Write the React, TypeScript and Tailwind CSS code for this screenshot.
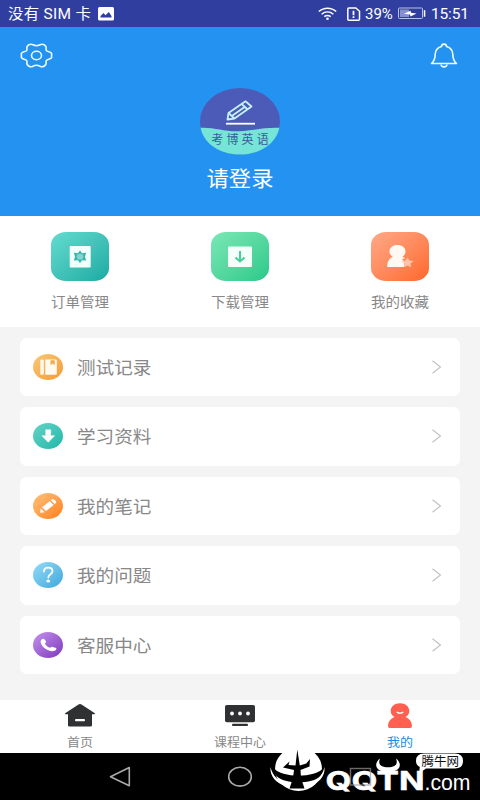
import type { ReactNode } from "react";

const shortcuts = [
  { t: "订单管理", bg: "from-[#63dccf] to-[#14aba3]", icon: <OrderIcon /> },
  { t: "下载管理", bg: "from-[#79e8b6] to-[#26c98a]", icon: <DownloadIcon /> },
  { t: "我的收藏", bg: "from-[#ffa987] to-[#ff6726]", icon: <FavoriteIcon /> },
];

const rows = [
  { t: "测试记录", bg: "from-[#f9c877] to-[#f59a2c]", icon: <BookIcon /> },
  { t: "学习资料", bg: "from-[#63d3c6] to-[#14b8a9]", icon: <ArrowIcon /> },
  { t: "我的笔记", bg: "from-[#ffc277] to-[#ff7e0c]", icon: <PencilIcon /> },
  { t: "我的问题", bg: "from-[#92dcf7] to-[#3ba7dc]", icon: <QuestionIcon /> },
  { t: "客服中心", bg: "from-[#c592ee] to-[#7e35bb]", icon: <PhoneIcon /> },
];

function OrderIcon() {
  return (
    <svg width="58" height="49" viewBox="0 0 58 49">
      <rect x="18.7" y="14" width="21" height="21.5" rx="1" fill="#f2fffd" />
      <path d="M29 18.6l2.1 2.7 4.1-.5-1.3 3.9 1.3 3.9-4.1-.4-2.1 2.8-2.1-2.8-4.1.4 1.3-3.9-1.3-3.9 4.1.5z" fill="#35b7ad" />
      <ellipse cx="29" cy="24.7" rx="3.4" ry="3" fill="#83d6cf" />
    </svg>
  );
}

function DownloadIcon() {
  return (
    <svg width="58" height="49" viewBox="0 0 58 49">
      <rect x="17" y="14.5" width="24" height="20.5" rx="1" fill="#f5fffa" />
      <path d="M29 19v10.5M24.5 25.5l4.5 4 4.5-4" fill="none" stroke="#45cf99" strokeWidth="2" />
    </svg>
  );
}

function FavoriteIcon() {
  return (
    <svg width="58" height="49" viewBox="0 0 58 49">
      <path d="M26.5 13c4.5 0 8 2.6 8 6.2 0 2.3-1.2 4.2-3 5.500 1 .4 2 1 2.700 1.600l-3.200.8 2.500 2.800-.6 5.100H16.200c0-5.500 2-8.700 5.500-10.300-1.900-1.300-3.200-3.200-3.200-5.500 0-3.600 3.500-6.200 8-6.200z" fill="#fff8f3" />
      <path d="M36.500 25.500l1.800 3 4.200.6-3 2.500.6 3.700-3.600-1.700-3.600 1.700.6-3.700-3-2.500 4.200-.6z" fill="#ffc4a9" />
    </svg>
  );
}

function BookIcon() {
  return (
    <svg width="30" height="26" viewBox="0 0 30 26">
      <rect x="7.3" y="5.5" width="3.5" height="15.3" rx="1" fill="#fffaf0" />
      <path d="M12.3 5.500h10.200a1.300 1.300 0 011.300 1.300v12.700a1.300 1.300 0 01-1.300 1.300H12.300z" fill="#fffaf0" />
      <path d="M17.500 6.300h4.200v5l-2.100-1.700-2.100 1.700z" fill="#f4a949" />
    </svg>
  );
}

function ArrowIcon() {
  return (
    <svg width="30" height="26" viewBox="0 0 30 26">
      <path d="M12.700 6.700h5v6h3.900l-6.400 6.600-6.400-6.600h3.900z" fill="#fff" stroke="#fff" strokeWidth=".5" strokeLinejoin="round" />
    </svg>
  );
}

function PencilIcon() {
  return (
    <svg width="30" height="26" viewBox="0 0 30 26">
      <path d="M7 19.800l.7-4.300 4 3.700z" fill="#fff" />
      <path d="M9 14.300l7.700-6 4 3.700-7.700 6z" fill="#fff" />
      <path d="M17.800 7.300l1.400-1c1.500-.7 4.800 2 3.800 3.800l-1.300 1z" fill="#fff" />
    </svg>
  );
}

function QuestionIcon() {
  return (
    <svg width="30" height="26" viewBox="0 0 30 26">
      <path d="M10.900 9.500c0-2.300 1.700-3.800 4.300-3.800 2.500 0 4.300 1.300 4.300 3.500 0 3-4.200 3-4.200 6.300" fill="none" stroke="#fff" strokeWidth="1.8" strokeLinecap="round" />
      <ellipse cx="15.2" cy="19" rx="1.9" ry="1.6" fill="#fff" />
    </svg>
  );
}

function PhoneIcon() {
  return (
    <svg width="30" height="26" viewBox="0 0 30 26">
      <path d="M8.300 7.800c1-1 2.500-1.400 3.300-.4l1.200 1.700c.5.800.1 1.500-.8 2.300.8 2.200 2.700 3.700 5.300 4.300.9-.8 1.700-1.100 2.500-.8l2.700.8c1.500.6 1 2-.2 2.700-2.600 1.500-7.200.7-10.600-2.100C8.400 13.600 6.600 9.900 8.300 7.800z" fill="#fff" />
    </svg>
  );
}

function StatusBar() {
  return (
    <div className="flex h-[27px] items-center bg-[#303f9f] px-2 font-['Roboto','Noto_Sans_CJK_SC',sans-serif] text-white">
      <span className="w-[84px] scale-y-[.94] text-[15.5px] leading-6 tracking-[.25px] whitespace-nowrap">没有 SIM 卡</span>
      <svg className="ml-[6px]" width="16" height="14" viewBox="0 0 16 14">
        <rect width="16" height="13.5" rx="1.5" fill="#fff" />
        <path d="M2.500 10.500V9l3-3 2 2.200L10.800 5l2.700 4v1.500z" fill="#303f9f" />
      </svg>
      <svg className="ml-auto" width="19" height="14" viewBox="0 0 19 14" fill="none" stroke="#fff" strokeWidth="1.5">
        <path d="M.8 4.500c5-4.500 12.400-4.500 17.400 0M3.600 7.200c3.500-3 8.300-3 11.800 0M6.300 9.700c2-1.600 4.400-1.600 6.400 0" />
        <circle cx="9.500" cy="11.700" r="1.300" fill="#fff" stroke="none" />
      </svg>
      <svg className="ml-[9px]" width="15" height="14" viewBox="0 0 15 14" fill="none" stroke="#fff" strokeWidth="1.500">
        <path d="M2.800 1h7l3.700 3.300v7.900q0 1-1 1H2.800q-1 0-1-1V6.200L1.800 2q0-1 1-1z" />
        <path d="M7.500 3.800v4.400M7.500 9.300v1.700" strokeWidth="1.800" />
      </svg>
      <span className="ml-[4px] w-[29px] scale-y-[.94] text-[15px] leading-6">39%</span>
      <svg className="ml-[4px]" width="28" height="13" viewBox="0 0 28 13">
        <rect x=".5" y="1" width="24" height="10.5" rx="1" fill="none" stroke="#b9c0ea" />
        <rect x="2" y="2.5" width="9" height="7.5" fill="#8791cd" />
        <path d="M6 6.700l6.500-3 .5 2 5.500.8-6 3-.5-2z" fill="#fff" />
        <rect x="25.8" y="3.2" width="1.5" height="6.5" fill="#fff" />
      </svg>
      <span className="mr-[4px] ml-[5px] w-[37px] scale-y-[.94] text-[15.5px] leading-6 tracking-[-.15px]">15:51</span>
    </div>
  );
}

function Avatar() {
  return (
    <svg width="80" height="67" viewBox="0 0 80 67">
      <ellipse cx="40" cy="33.3" rx="40" ry="33.3" fill="#4c5bb8" />
      <path d="M.6 39.800C14 39 25 44 39 43.300c14-.7 24-4 40.400-3.500C76.500 55.500 60 66.600 40 66.600S3.500 55.500.6 39.800z" fill="#76e5d7" />
      <g fill="none" stroke="#c5f1f5" strokeWidth="1.800" strokeLinejoin="round">
        <path d="M27.500 31.500l1-6.500L45.500 13.300l6 5.200-17 12z" />
        <path d="M28.500 25l6 5.500M41.500 16l6 5.200M32.500 27.500l12.500-8.700" />
        <path d="M26 35.700h29" stroke="#fff" />
      </g>
      <text x="11.300" y="56" fontSize="12" textLength="57.500" fill="#3e57a5">考博英语</text>
    </svg>
  );
}

function Header() {
  return (
    <header className="flex h-[188.500px] flex-col bg-[#2492f1]">
      <div className="flex h-[61px] items-start justify-between pt-4 pr-[22px] pl-5">
        <svg width="33" height="26" viewBox="0 0 33 26" fill="none" stroke="#edfbff" strokeWidth="1.6">
          <path d="M11 1.200c1.800 0 2.400 1.500 5.500 1.500s3.700-1.500 5.500-1.500c1.600 0 3.500 1.500 4 2.600.6 1.600-.6 2.300.4 3.800s4.800 1 5.200 2.900v4c-.4 1.900-4.200 1.400-5.200 2.900s.2 2.200-.4 3.800c-.5 1.100-2.400 2.600-4 2.600-1.800 0-2.400-1.500-5.500-1.500s-3.700 1.500-5.500 1.500c-1.600 0-3.500-1.500-4-2.600-.6-1.600.6-2.300-.4-3.800s-4.800-1-5.200-2.900v-4c.4-1.900 4.200-1.400 5.200-2.900s-.2-2.200.4-3.800c.5-1.100 2.400-2.600 4-2.600z" />
          <ellipse cx="16.500" cy="12.500" rx="5" ry="4.200" />
        </svg>
        <svg width="28" height="27" viewBox="0 0 28 27" fill="none" stroke="#edfbff" strokeWidth="1.600" strokeLinejoin="round">
          <path d="M11.500 3.500c0-3.200 5-3.200 5 0 4.500 1.300 6.300 4 6.300 8 0 4.500 1 6.500 3.700 9H1.500c2.700-2.500 3.700-4.500 3.700-9 0-4 1.800-6.700 6.300-8z" />
          <path d="M11 21.500c.3 3.200 5.700 3.200 6 0" />
        </svg>
      </div>
      <div className="flex flex-col items-center">
        <Avatar />
        <span className="mt-[6px] scale-y-[.94] text-[22.300px] leading-8 text-white">请登录</span>
      </div>
    </header>
  );
}

function Shortcuts() {
  return (
    <section className="grid h-[111px] grid-cols-3 bg-white pt-4">
      {shortcuts.map((s) => (
        <div key={s.t} className="flex flex-col items-center">
          <div className={`h-[49px] w-[58px] rounded-[15px/13px] bg-gradient-to-br ${s.bg}`}>{s.icon}</div>
          <span className="mt-[10px] scale-y-[.94] text-[14.500px] leading-5 text-[#888]">{s.t}</span>
        </div>
      ))}
    </section>
  );
}

function Row({ t, bg, icon }: { t: string; bg: string; icon: ReactNode }) {
  return (
    <div className="flex h-[58.300px] items-center rounded-[7px] bg-white pr-[18px] pl-[13px]">
      <div className={`h-[26px] w-[30px] rounded-[50%] bg-gradient-to-br ${bg}`}>{icon}</div>
      <span className="mb-[2px] ml-[14px] scale-y-[.94] text-[18.600px] leading-7 text-[#888]">{t}</span>
      <svg className="ml-auto" width="11" height="14" viewBox="0 0 11 14" fill="none" stroke="#c0c0c0" strokeWidth="1.100">
        <path d="M1.500.8L9.500 7l-8 6.200" />
      </svg>
    </div>
  );
}

function TabBar() {
  return (
    <nav className="grid h-[53px] grid-cols-3 bg-white pt-[3px] text-[13px] leading-4 text-[#888]">
      <div className="flex flex-col items-center">
        <svg width="30" height="26" viewBox="0 -1 30 26">
          <path d="M15 0c.6 0 1 .2 1.500.5l13 8.500c.8.600.4 1.300-.5 1.300h-2v11q0 1.200-1.400 1.200H4.400Q3 22.500 3 21.300v-11H1c-.9 0-1.300-.7-.5-1.300l13-8.500c.5-.3.9-.5 1.500-.5z" fill="#303133" />
          <rect x="10" y="15" width="10" height="2.300" rx="1" fill="#fff" />
        </svg>
        <span className="mt-[5px] scale-y-[.94]">首页</span>
      </div>
      <div className="flex flex-col items-center">
        <svg width="30" height="26" viewBox="0 -1 30 26">
          <rect y="1" width="30" height="17.300" rx="1.800" fill="#303133" />
          <g fill="#fff">
            <circle cx="7" cy="9.500" r="1.900" />
            <circle cx="15" cy="9.500" r="1.900" />
            <circle cx="23" cy="9.500" r="1.900" />
          </g>
          <rect x="7" y="19.700" width="16" height="2.200" rx="1" fill="#303133" />
        </svg>
        <span className="mt-[5px] scale-y-[.94]">课程中心</span>
      </div>
      <div className="flex flex-col items-center">
        <svg width="30" height="26" viewBox="0 -1 30 26">
          <path d="M15-.8c5.500 0 9.300 3.300 9.300 7.700 0 2.800-1.500 4.800-3.800 6.100 4 1.500 6.300 4.700 6.500 9.300q0 1.700-1.800 1.700H4.800Q3 24 3 22.300c.2-4.600 2.500-7.800 6.500-9.300-2.300-1.300-3.800-3.300-3.800-6.100C5.700 2.500 9.500-.8 15-.8z" fill="#ff604f" />
          <path d="M12.300 8.300q2.700 1.800 5.400 0" stroke="#fff" strokeWidth="1.500" fill="none" strokeLinecap="round" />
        </svg>
        <span className="mt-[5px] scale-y-[.94] text-[#1e88e5]">我的</span>
      </div>
    </nav>
  );
}

function Watermark() {
  return (
    <svg className="absolute right-0 bottom-0" width="220" height="56" viewBox="260 744 220 56">
      <ellipse cx="298.500" cy="769" rx="23.500" ry="22" fill="#fff" />
      {/* emblem: ring and trident */}
      <path d="M274.500 768.500c6 9.500 42 9.500 48 0 .5 3-.5 5.500-2 7.500-8 8.500-36 8.500-44 0-1.500-2-2.500-4.500-2-7.500z" fill="#000" />
      <path d="M270.500 767c2 9.500 9 14.500 17 17l-.5 2.500c-10-2.500-17.500-10-16.500-19.500zM324.500 767c-2 9.500-9 14.500-17 17l.5 2.500c10-2.500 17.500-10 16.500-19.500z" fill="#fff" />
      <path d="M297.300 749.500l2.500 16 6.500-2 3.700-4.500-.5 7.500-9 3.500.5 8 3.500 10.500h-15l3.500-10.500 1-8-11-2.500 6.500-6-1 3.500 7 .5z" fill="#000" />
      {/* horns */}
      <path d="M380 758.500c-7.500 6-3.500 13.500 8 13.500s15.500-7.500 8-13.500c2.500 6.500-1.500 8.700-8 8.700s-10.500-2.200-8-8.700z" fill="#fff" />
      <text x="325.500" y="790" fontSize="26" fontWeight="700" fontFamily="Inter" textLength="99" lengthAdjust="spacingAndGlyphs" fill="#fff" stroke="#fff" strokeWidth=".5">QQTN</text>
      <rect x="350.500" y="768.500" width="20" height="16.500" fill="none" stroke="#999" strokeOpacity=".7" strokeWidth="1.400" />
      <text x="424.500" y="790" fontSize="22" fontFamily="Liberation Sans" textLength="46" lengthAdjust="spacingAndGlyphs" fill="#fff">.com</text>
      <path d="M424 753.500h31q8 0 8 7.500t-8 7.500h-29l-7 5 .8-6.500q-3.800-1.800-3.800-6 0-7.500 8-7.500z" fill="#fff" />
      <text x="421.500" y="766" fontSize="12.500" textLength="37.500" fill="#111">腾牛网</text>
    </svg>
  );
}

export default function App() {
  return (
    <div className="relative flex h-[800px] w-[480px] flex-col overflow-hidden bg-[#f4f4f4] font-['Noto_Sans_CJK_SC',sans-serif]">
      <StatusBar />
      <Header />
      <Shortcuts />
      <main className="flex flex-1 flex-col gap-[11.200px] px-5 pt-[11.300px]">
        {rows.map((r) => (
          <Row key={r.t} {...r} />
        ))}
      </main>
      <TabBar />
      <footer className="h-[47px] bg-black">
        <svg width="480" height="47" viewBox="0 0 480 47" fill="none" stroke="#aaa" strokeWidth="1.600" strokeLinejoin="round">
          <path d="M129.300 14.500v18.300L110.500 23.700z" />
          <ellipse cx="240" cy="23.700" rx="11.300" ry="9.400" />
        </svg>
      </footer>
      <Watermark />
    </div>
  );
}
